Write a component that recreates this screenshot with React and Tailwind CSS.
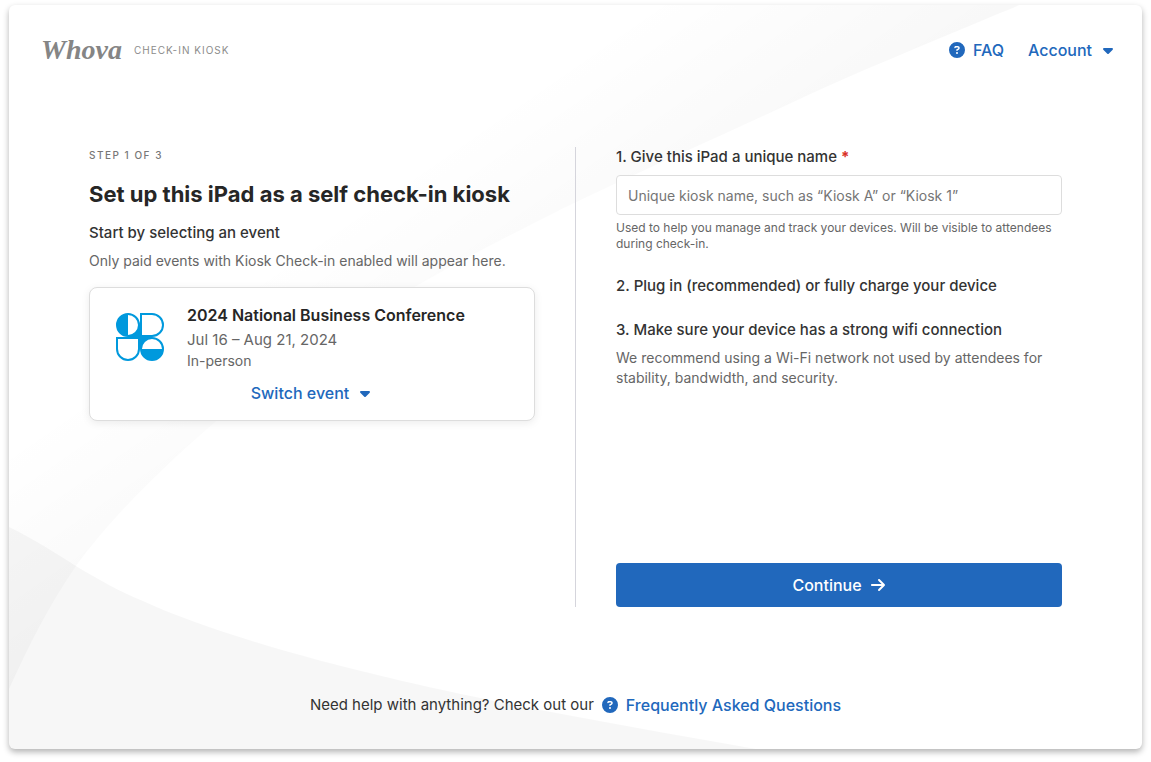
import React from "react";
import { FaCircleQuestion, FaCaretDown, FaArrowRight } from "react-icons/fa6";

function Backdrop() {
  return (
    <svg
      className="absolute inset-0 -z-10 h-full w-full"
      viewBox="0 0 1133 744"
      preserveAspectRatio="none"
      aria-hidden="true"
    >
      <defs>
        <linearGradient id="sweep" gradientUnits="userSpaceOnUse" x1="631" y1="0" x2="751" y2="173">
          <stop offset="0" stopColor="#000" stopOpacity="0" />
          <stop offset="1" stopColor="#000" stopOpacity="0.028" />
        </linearGradient>
      </defs>
      <path
        d="M0 0H1010C1004 3 999 5 991 8C920 38 850 66 780 99C690 141 600 180 531 215C400 281 290 345 198 424C150 466 100 515 67 561C40 600 20 640 0 684Z"
        fill="url(#sweep)"
      />
      <path
        d="M0 522C25 534 45 547 67 561C90 575 112 587 134 596C190 622 290 652 377 672C480 697 620 722 747 744H0Z"
        fill="#000"
        fillOpacity="0.033"
      />
    </svg>
  );
}

function EventLogo() {
  return (
    <svg className="h-12 w-12 shrink-0" viewBox="0 0 48 48" aria-hidden="true">
      <rect x="12" y="12" width="24" height="24" fill="#0099dd" />
      <g fill="#fff" stroke="#0099dd" strokeWidth="2">
        <circle cx="12" cy="12" r="11" />
        <path d="M25 1H36A11 11 0 0 1 36 23H25Z" />
        <path d="M1 25H23V36A11 11 0 0 1 1 36Z" />
        <circle cx="36" cy="36" r="11" />
      </g>
      <path d="M12 1A11 11 0 0 0 12 23Z" fill="#0099dd" />
      <path d="M25 36A11 11 0 0 0 47 36Z" fill="#0099dd" />
    </svg>
  );
}

export default function App() {
  return (
    <div className="flex min-h-screen flex-col bg-white px-[9px] pt-[5px] pb-[13px] font-['Inter',sans-serif] text-[#333]">
      <div className="relative isolate flex grow flex-col overflow-hidden rounded-md bg-white shadow-[0_3px_6px_rgba(0,0,0,0.3)]">
        <Backdrop />

        <header className="flex items-center justify-between pt-7 pr-[26px] pl-8">
          <div className="flex items-center gap-3">
            <span className="font-['Liberation_Serif',serif] text-[28px] leading-[34px] font-bold text-[#858585] italic">
              Whova
            </span>
            <span className="text-[10px] leading-4 tracking-widest text-[#8c8c8c]">CHECK-IN KIOSK</span>
          </div>
          <nav className="flex items-center gap-6 text-base font-medium text-[#2168bc]">
            <a href="#faq" className="flex items-center gap-2">
              <FaCircleQuestion className="h-4 w-4" />
              FAQ
            </a>
            <button type="button" className="flex items-center gap-2">
              Account
              <FaCaretDown className="h-4 w-4" />
            </button>
          </nav>
        </header>

        <main className="mt-20 flex grow gap-10 px-20">
          <section className="flex-1">
            <p className="text-[10px] leading-4 font-medium tracking-[0.15em] text-[#777]">STEP 1 OF 3</p>
            <h1 className="mt-[15px] text-[22px] leading-8 font-bold text-[#262626]">
              Set up this iPad as a self check-in kiosk
            </h1>
            <h2 className="mt-[13px] text-[15px] leading-5 font-medium">Start by selecting an event</h2>
            <p className="mt-2 text-sm leading-5 text-[#666]">
              Only paid events with Kiosk Check-in enabled will appear here.
            </p>
            <div className="mt-4 flex flex-col rounded-lg border border-[#ddd] bg-white px-[26px] py-[15px] shadow-[0_2px_8px_rgba(0,0,0,0.08)]">
              <div className="flex items-center gap-[23px]">
                <EventLogo />
                <div>
                  <h3 className="mb-0.5 text-base leading-6 font-semibold text-[#262626]">
                    2024 National Business Conference
                  </h3>
                  <p className="text-[15px] leading-[21px] text-[#666]">Jul 16 – Aug 21, 2024</p>
                  <p className="text-sm leading-[21px] text-[#666]">In-person</p>
                </div>
              </div>
              <button
                type="button"
                className="mt-2.5 flex items-center justify-center gap-2 text-base leading-6 font-medium text-[#2168bc]"
              >
                Switch event
                <FaCaretDown className="h-4 w-4" />
              </button>
            </div>
          </section>

          <div className="w-px bg-[#d5d5dc]" />

          <section className="flex flex-1 flex-col">
            <label htmlFor="kiosk-name" className="text-[15px] leading-5 font-medium">
              1. Give this iPad a unique name <span className="font-bold text-[#d93025]">*</span>
            </label>
            <input
              id="kiosk-name"
              type="text"
              required
              placeholder="Unique kiosk name, such as “Kiosk A” or “Kiosk 1”"
              className="mt-2 h-10 rounded border border-[#ddd] bg-white px-[11px] text-sm placeholder:text-[#757575]"
            />
            <p className="mt-[5px] text-xs leading-4 text-[#666]">
              Used to help you manage and track your devices. Will be visible to attendees during check-in.
            </p>
            <h2 className="mt-6 text-[15px] leading-5 font-medium">
              2. Plug in (recommended) or fully charge your device
            </h2>
            <h2 className="mt-6 text-[15px] leading-5 font-medium">
              3. Make sure your device has a strong wifi connection
            </h2>
            <p className="mt-2 text-sm leading-5 text-[#666]">
              We recommend using a Wi-Fi network not used by attendees for stability, bandwidth, and security.
            </p>
            <button
              type="button"
              className="mt-auto flex h-11 shrink-0 items-center justify-center gap-2 rounded bg-[#2168bc] text-base font-medium text-white"
            >
              Continue
              <FaArrowRight className="h-4 w-4" />
            </button>
          </section>
        </main>

        <footer className="flex items-center justify-center gap-2 pt-[86px] pb-8 text-[15px] leading-6">
          <span>Need help with anything? Check out our</span>
          <a href="#faq" className="flex items-center gap-2 text-base font-medium text-[#2168bc]">
            <FaCircleQuestion className="h-4 w-4" />
            Frequently Asked Questions
          </a>
        </footer>
      </div>
    </div>
  );
}
